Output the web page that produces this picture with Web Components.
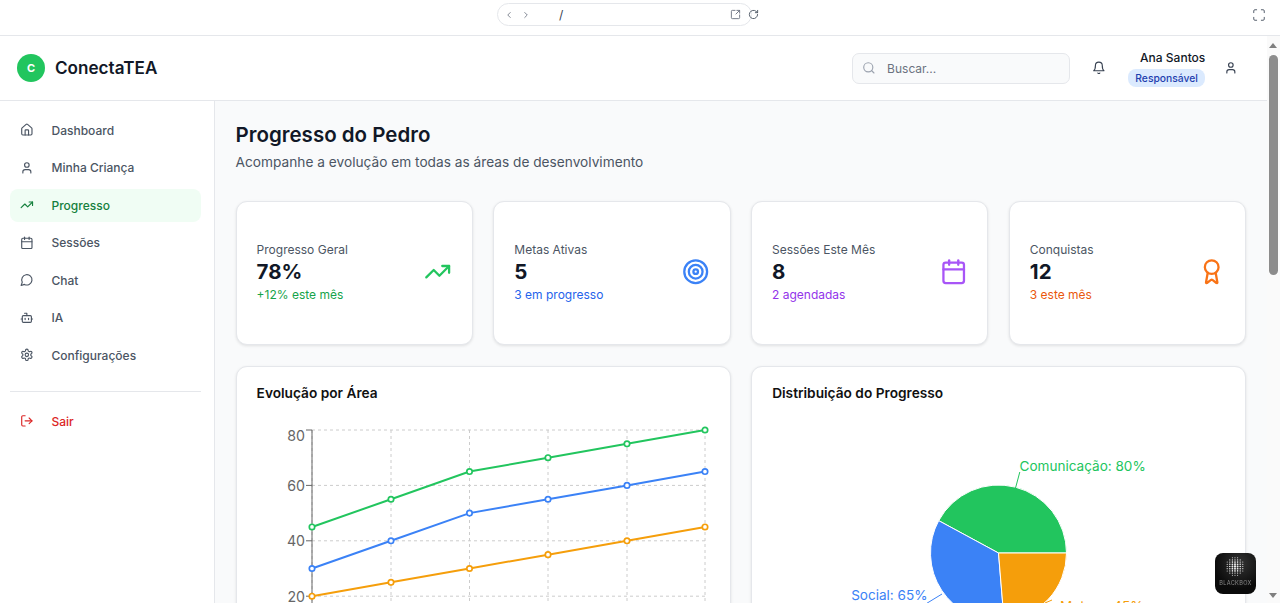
<!DOCTYPE html>
<html lang="pt-BR">
<head>
<meta charset="utf-8">
<title>ConectaTEA</title>
<style>
	html, body { margin: 0; height: 603px; overflow: hidden; background: #fff; font-family: Inter, "Liberation Sans", sans-serif; }
</style>
</head>
<body>

<app-shell>
	<browser-bar slot="top"></browser-bar>
	<app-header slot="header" user="Ana Santos" role="Responsável"></app-header>
	<side-nav slot="side">
		<nav-item icon="home">Dashboard</nav-item>
		<nav-item icon="user">Minha Criança</nav-item>
		<nav-item icon="trending" active>Progresso</nav-item>
		<nav-item icon="calendar">Sessões</nav-item>
		<nav-item icon="chat">Chat</nav-item>
		<nav-item icon="bot">IA</nav-item>
		<nav-item icon="settings">Configurações</nav-item>
		<nav-item icon="logout" slot="footer" danger>Sair</nav-item>
	</side-nav>
	<progress-page>
		<stat-card label="Progresso Geral" value="78%" note="+12% este mês" icon="trending" tone="#16a34a" stroke="#22c55e"></stat-card>
		<stat-card label="Metas Ativas" value="5" note="3 em progresso" icon="target" tone="#2563eb" stroke="#3b82f6"></stat-card>
		<stat-card label="Sessões Este Mês" value="8" note="2 agendadas" icon="calendar" tone="#9333ea" stroke="#a855f7"></stat-card>
		<stat-card label="Conquistas" value="12" note="3 este mês" icon="award" tone="#ea580c" stroke="#f97316"></stat-card>
		<chart-card slot="charts" heading="Evolução por Área"><line-chart></line-chart></chart-card>
		<chart-card slot="charts" heading="Distribuição do Progresso"><pie-chart></pie-chart></chart-card>
	</progress-page>
	<page-scrollbar slot="scroll"></page-scrollbar>
</app-shell>
<blackbox-badge></blackbox-badge>

<script>
const ICONS = {
	home: '<path d="M15 21v-8a1 1 0 0 0-1-1h-4a1 1 0 0 0-1 1v8"/><path d="M3 10a2 2 0 0 1 .709-1.528l7-5.999a2 2 0 0 1 2.582 0l7 5.999A2 2 0 0 1 21 10v9a2 2 0 0 1-2 2H5a2 2 0 0 1-2-2z"/>',
	user: '<path d="M19 21v-2a4 4 0 0 0-4-4H9a4 4 0 0 0-4 4v2"/><circle cx="12" cy="7" r="4"/>',
	trending: '<polyline points="22 7 13.5 15.5 8.5 10.5 2 17"/><polyline points="16 7 22 7 22 13"/>',
	calendar: '<path d="M8 2v4"/><path d="M16 2v4"/><rect width="18" height="18" x="3" y="4" rx="2"/><path d="M3 10h18"/>',
	chat: '<path d="M7.9 20A9 9 0 1 0 4 16.1L2 22Z"/>',
	bot: '<path d="M12 8V4H8"/><rect width="16" height="12" x="4" y="8" rx="2"/><path d="M2 14h2"/><path d="M20 14h2"/><path d="M15 13v2"/><path d="M9 13v2"/>',
	settings: '<path d="M12.22 2h-.44a2 2 0 0 0-2 2v.18a2 2 0 0 1-1 1.73l-.43.25a2 2 0 0 1-2 0l-.15-.08a2 2 0 0 0-2.73.73l-.22.38a2 2 0 0 0 .73 2.73l.15.1a2 2 0 0 1 1 1.72v.51a2 2 0 0 1-1 1.74l-.15.09a2 2 0 0 0-.73 2.73l.22.38a2 2 0 0 0 2.73.73l.15-.08a2 2 0 0 1 2 0l.43.25a2 2 0 0 1 1 1.73V20a2 2 0 0 0 2 2h.44a2 2 0 0 0 2-2v-.18a2 2 0 0 1 1-1.73l.43-.25a2 2 0 0 1 2 0l.15.08a2 2 0 0 0 2.73-.73l.22-.39a2 2 0 0 0-.73-2.73l-.15-.08a2 2 0 0 1-1-1.74v-.5a2 2 0 0 1 1-1.74l.15-.09a2 2 0 0 0 .73-2.73l-.22-.38a2 2 0 0 0-2.73-.73l-.15.08a2 2 0 0 1-2 0l-.43-.25a2 2 0 0 1-1-1.73V4a2 2 0 0 0-2-2z"/><circle cx="12" cy="12" r="3"/>',
	logout: '<path d="M9 21H5a2 2 0 0 1-2-2V5a2 2 0 0 1 2-2h4"/><polyline points="16 17 21 12 16 7"/><line x1="21" y1="12" x2="9" y2="12"/>',
	search: '<circle cx="11" cy="11" r="8"/><path d="m21 21-4.3-4.3"/>',
	bell: '<path d="M6 8a6 6 0 0 1 12 0c0 7 3 9 3 9H3s3-2 3-9"/><path d="M10.3 21a1.94 1.94 0 0 0 3.4 0"/>',
	target: '<circle cx="12" cy="12" r="10"/><circle cx="12" cy="12" r="6"/><circle cx="12" cy="12" r="2"/>',
	award: '<path d="m15.477 12.89 1.515 8.526a.5.5 0 0 1-.81.47l-3.58-2.687a1 1 0 0 0-1.197 0l-3.586 2.686a.5.5 0 0 1-.81-.469l1.514-8.526"/><circle cx="12" cy="8" r="6"/>',
	left: '<path d="m15 18-6-6 6-6"/>',
	right: '<path d="m9 18 6-6-6-6"/>',
	open: '<path d="M21 13v6a2 2 0 0 1-2 2H5a2 2 0 0 1-2-2V5a2 2 0 0 1 2-2h6"/><path d="M13 11 21 3"/><path d="M15 3h6v6"/>',
	reload: '<path d="M21 12a9 9 0 1 1-3-6.7L21 8"/><path d="M21 3v5h-5"/>',
	full: '<path d="M8 3H5a2 2 0 0 0-2 2v3"/><path d="M21 8V5a2 2 0 0 0-2-2h-3"/><path d="M3 16v3a2 2 0 0 0 2 2h3"/><path d="M16 21h3a2 2 0 0 0 2-2v-3"/>'
}

const FONT = 'Inter, "Liberation Sans", sans-serif'

class UiIcon extends HTMLElement {

	connectedCallback() {

		const size = this.getAttribute('size') || 13.7
		const weight = this.getAttribute('weight') || 2

		this.attachShadow({mode: 'open'}).innerHTML = `
			<style>
				:host{ display: inline-flex; flex: none; width: ${size}px; height: ${size}px; }
				svg{ display: block; width: 100%; height: 100%; }
			</style>
			<svg viewBox="0 0 24 24" fill="none" stroke="currentColor" stroke-width="${weight}" stroke-linecap="round" stroke-linejoin="round">${ICONS[this.getAttribute('name')]}</svg>
		`

	}

}

class AppShell extends HTMLElement {

	constructor(){

		super()

		this.attachShadow({mode: 'open'}).innerHTML = `
			<style>
				:host{ display: flex; flex-direction: column; width: 1280px; height: 603px; overflow: hidden; }
				#frame{ flex: 1; min-height: 0; display: flex; }
				#app{ flex: 1; min-width: 0; display: flex; flex-direction: column; }
				#body{ flex: 1; min-height: 0; display: flex; }
			</style>
			<slot name="top"></slot>
			<div id="frame">
				<div id="app">
					<slot name="header"></slot>
					<div id="body">
						<slot name="side"></slot>
						<slot></slot>
					</div>
				</div>
				<slot name="scroll"></slot>
			</div>
		`

	}

}

class BrowserBar extends HTMLElement {

	constructor(){

		super()

		this.attachShadow({mode: 'open'}).innerHTML = `
			<style>
				:host{ display: flex; align-items: flex-start; height: 35px; border-bottom: 1px solid #e5e7eb; background: #fff; color: #6b7280; box-sizing: content-box; }
				#pill{ margin: 3px 0 0 497px; width: 255px; height: 23px; box-sizing: border-box; border: 1px solid #e5e7eb; border-radius: 12px; display: flex; align-items: center; padding-left: 6px; }
				#path{ margin-left: 28px; font: 12px ${FONT}; color: #374151; }
				#open{ margin-left: auto; margin-right: 10px; display: flex; }
				#reload{ margin: 9px 0 0 -4px; color: #4b5563; }
				#full{ margin: 8px 0 0 auto; margin-right: 14px; color: #4b5563; }
				.arrow{ color: #6b7280; }
				.arrow + .arrow{ margin-left: 7px; }
			</style>
			<div id="pill">
				<ui-icon class="arrow" name="left" size="10"></ui-icon>
				<ui-icon class="arrow" name="right" size="10"></ui-icon>
				<span id="path">/</span>
				<ui-icon id="open" name="open" size="11"></ui-icon>
			</div>
			<ui-icon id="reload" name="reload" size="11"></ui-icon>
			<ui-icon id="full" name="full" size="14" weight="1.6"></ui-icon>
		`

	}

}

class AppHeader extends HTMLElement {

	connectedCallback() {

		this.attachShadow({mode: 'open'}).innerHTML = `
			<style>
				:host{ display: flex; align-items: center; height: 64px; border-bottom: 1px solid #e5e7eb; background: #fff; padding: 0 29px 0 17px; box-sizing: content-box; font-family: ${FONT}; }
				#logo{ width: 28px; height: 28px; border-radius: 50%; background: #22c55e; color: #fff; font-size: 11px; font-weight: 700; display: flex; align-items: center; justify-content: center; }
				#brand{ margin: 0 0 1px 10px; font-size: 17.1px; font-weight: 600; color: #111827; }
				#search{ margin-left: auto; width: 218px; height: 31px; box-sizing: border-box; background: #f9fafb; border: 1px solid #e5e7eb; border-radius: 7px; display: flex; align-items: center; gap: 11.3px; padding-left: 9px; color: #6b7280; font-size: 12px; }
				#search ui-icon{ color: #9ca3af; }
				#bell{ margin-left: 22px; color: #374151; }
				#who{ margin-left: 22px; display: flex; flex-direction: column; align-items: flex-end; gap: 3px; }
				#name{ font-size: 12px; font-weight: 500; color: #111827; line-height: 16px; }
				#role{ font-size: 10.3px; font-weight: 500; color: #1e40af; background: #dbeafe; border-radius: 8px; padding: 0 7.5px; line-height: 18px; }
				#me{ margin-left: 19px; color: #374151; }
			</style>
			<div id="logo">C</div>
			<div id="brand">ConectaTEA</div>
			<div id="search"><ui-icon name="search"></ui-icon><span>Buscar...</span></div>
			<ui-icon id="bell" name="bell"></ui-icon>
			<div id="who">
				<div id="name">${this.getAttribute('user')}</div>
				<div id="role">${this.getAttribute('role')}</div>
			</div>
			<ui-icon id="me" name="user"></ui-icon>
		`

	}

}

class SideNav extends HTMLElement {

	constructor(){

		super()

		this.attachShadow({mode: 'open'}).innerHTML = `
			<style>
				:host{ display: flex; flex-direction: column; width: 214px; flex: none; box-sizing: content-box; border-right: 1px solid #e5e7eb; background: #fff; padding-top: 12.5px; }
				#list{ display: flex; flex-direction: column; gap: 4.5px; padding: 0 13px 0 10px; }
				#rule{ margin: 19.5px 13px 12.5px 10px; border-top: 1px solid #e5e7eb; }
				#foot{ padding: 0 13px 0 10px; }
			</style>
			<div id="list"><slot></slot></div>
			<div id="rule"></div>
			<div id="foot"><slot name="footer"></slot></div>
		`

	}

}

class NavItem extends HTMLElement {

	connectedCallback() {

		const color = this.hasAttribute('active') ? '#15803d' : this.hasAttribute('danger') ? '#dc2626' : '#4b5563'

		this.attachShadow({mode: 'open'}).innerHTML = `
			<style>
				:host{ display: flex; align-items: center; gap: 17.5px; height: 33px; box-sizing: border-box; padding-left: 10.3px; border-radius: 8px; font: 500 12px ${FONT}; color: ${color}; background: ${this.hasAttribute('active') ? '#f0fdf4' : 'transparent'}; }
				ui-icon{ color: ${this.hasAttribute('active') || this.hasAttribute('danger') ? color : '#4b5563'}; }
			</style>
			<ui-icon name="${this.getAttribute('icon')}"></ui-icon>
			<slot></slot>
		`

	}

}

class ProgressPage extends HTMLElement {

	constructor(){

		super()

		this.attachShadow({mode: 'open'}).innerHTML = `
			<style>
				:host{ display: block; flex: 1; min-width: 0; overflow: hidden; background: #f9fafb; padding: 20px 21px 0 20.6px; box-sizing: border-box; font-family: ${FONT}; }
				h1{ margin: 0; font-size: 20.5px; font-weight: 600; line-height: 28px; color: #111827; }
				p{ margin: 3px 0 0; font-size: 13.7px; line-height: 20px; color: #4b5563; }
				#stats{ margin-top: 28.6px; display: grid; grid-template-columns: repeat(4, 1fr); gap: 20.55px; }
				#charts{ margin-top: 21.4px; display: grid; grid-template-columns: repeat(2, 1fr); gap: 20.55px; }
			</style>
			<h1>Progresso do Pedro</h1>
			<p>Acompanhe a evolução em todas as áreas de desenvolvimento</p>
			<div id="stats"><slot></slot></div>
			<div id="charts"><slot name="charts"></slot></div>
		`

	}

}

class StatCard extends HTMLElement {

	connectedCallback() {

		const get = n => this.getAttribute(n)

		this.attachShadow({mode: 'open'}).innerHTML = `
			<style>
				:host{ display: flex; align-items: center; justify-content: space-between; height: 144px; box-sizing: border-box; padding: 0 20px 1px; background: #fff; border: 1px solid #e5e7eb; border-radius: 11px; box-shadow: 0 1px 3px rgba(0,0,0,.1); }
				#label{ font-size: 12px; font-weight: 400; line-height: 18px; color: #4b5563; }
				#value{ font-size: 20.5px; font-weight: 700; line-height: 26px; color: #111827; }
				#note{ font-size: 12px; line-height: 18px; margin-top: 1px; color: ${get('tone')}; }
				ui-icon{ color: ${get('stroke')}; }
			</style>
			<div>
				<div id="label">${get('label')}</div>
				<div id="value">${get('value')}</div>
				<div id="note">${get('note')}</div>
			</div>
			<ui-icon name="${get('icon')}" size="27.4"></ui-icon>
		`

	}

}

class ChartCard extends HTMLElement {

	connectedCallback() {

		this.attachShadow({mode: 'open'}).innerHTML = `
			<style>
				:host{ display: block; height: 320px; box-sizing: border-box; padding: 16px 20px 0; background: #fff; border: 1px solid #e5e7eb; border-radius: 11px; box-shadow: 0 1px 3px rgba(0,0,0,.1); }
				h3{ margin: 0; font-size: 13.7px; font-weight: 600; line-height: 20px; color: #111; }
				#plot{ margin-top: 18px; }
			</style>
			<h3>${this.getAttribute('heading')}</h3>
			<div id="plot"><slot></slot></div>
		`

	}

}

class LineChart extends HTMLElement {

	connectedCallback() {

		// plot origin is 257,421 on the page
		const xs = [55, 134, 212.5, 291, 370, 448]
		const y = v => 9 + (80 - v) * 2.77
		const series = [
			['#22c55e', [45, 55, 65, 70, 75, 80]],
			['#3b82f6', [30, 40, 50, 55, 60, 65]],
			['#f59e0b', [20, 25, 30, 35, 40, 45]]
		]

		let grid = ''

		xs.forEach(x => grid += `<line x1="${x}" y1="9" x2="${x}" y2="260"/>`)
		;[80, 60, 40, 20, 0].forEach(v => grid += `<line x1="55" y1="${y(v)}" x2="448" y2="${y(v)}"/>`)

		let ticks = ''

		// the top label sits under its tick, the chart keeps it inside the plot
		;[80, 60, 40, 20].forEach(v => ticks += `
			<line x1="49" y1="${y(v)}" x2="55" y2="${y(v)}" stroke="#666"/>
			<text x="48" y="${y(v) + (v === 80 ? 11 : 5.5)}" text-anchor="end">${v}</text>`)

		let lines = ''

		series.forEach(([color, values]) => {

			lines += `<polyline fill="none" stroke="${color}" stroke-width="2" points="${values.map((v, i) => xs[i] + ',' + y(v)).join(' ')}"/>`

			values.forEach((v, i) => lines += `<circle cx="${xs[i]}" cy="${y(v)}" r="2.7" fill="#fff" stroke="${color}" stroke-width="1.7"/>`)

		})

		this.attachShadow({mode: 'open'}).innerHTML = `
			<style>
				:host{ display: block; }
				svg{ display: block; overflow: visible; }
				text{ font: 14.2px ${FONT}; fill: #666; }
			</style>
			<svg width="453" height="270" viewBox="0 0 453 270">
				<g stroke="#ccc" stroke-dasharray="3 3">${grid}</g>
				<line x1="55" y1="9" x2="55" y2="260" stroke="#666"/>
				${ticks}
				${lines}
			</svg>
		`

	}

}

class PieChart extends HTMLElement {

	connectedCallback() {

		// plot origin is 772,421 on the page
		const cx = 226.5, cy = 132, r = 68
		const data = [
			['#22c55e', 80],
			['#3b82f6', 65],
			['#f59e0b', 45]
		]
		const total = data.reduce((sum, d) => sum + d[1], 0)
		const at = a => (cx + r * Math.cos(a * Math.PI / 180)).toFixed(2) + ' ' + (cy - r * Math.sin(a * Math.PI / 180)).toFixed(2)

		let start = 0, slices = ''

		data.forEach(([color, value]) => {

			const end = start + value / total * 360

			slices += `<path d="M${cx} ${cy}L${at(start)}A${r} ${r} 0 ${end - start > 180 ? 1 : 0} 0 ${at(end)}Z" fill="${color}" stroke="#fff"/>`

			start = end

		})

		this.attachShadow({mode: 'open'}).innerHTML = `
			<style>
				:host{ display: block; }
				svg{ display: block; overflow: visible; }
				text{ font: 13.55px ${FONT}; }
			</style>
			<svg width="453" height="270" viewBox="0 0 453 270">
				${slices}
				<path d="M243.4 67.5L247.8 51" fill="none" stroke="#22c55e"/>
				<path d="M170 173L154.8 182.3" fill="none" stroke="#3b82f6"/>
				<path d="M273 182L280 179" fill="none" stroke="#f59e0b"/>
				<text x="247.5" y="50" fill="#22c55e">Comunicação: 80%</text>
				<text x="155.5" y="179" text-anchor="end" fill="#3b82f6">Social: 65%</text>
				<text x="288" y="189.5" fill="#f59e0b">Motora: 45%</text>
			</svg>
		`

	}

}

class PageScrollbar extends HTMLElement {

	constructor(){

		super()

		this.attachShadow({mode: 'open'}).innerHTML = `
			<style>
				:host{ display: flex; flex-direction: column; align-items: center; width: 13px; flex: none; background: #fafafa; padding: 7px 1px 0 0; box-sizing: border-box; }
				.up{ width: 0; height: 0; border: 4px solid transparent; border-top: 0; border-bottom: 5px solid #7f7f7f; }
				.down{ width: 0; height: 0; border: 4px solid transparent; border-bottom: 0; border-top: 5px solid #7f7f7f; margin-top: auto; margin-bottom: 5px; }
				#thumb{ margin-top: 7px; width: 9px; height: 220px; border-radius: 5px; background: #8c8c8c; }
			</style>
			<div class="up"></div>
			<div id="thumb"></div>
			<div class="down"></div>
		`

	}

}

class BlackboxBadge extends HTMLElement {

	constructor(){

		super()

		let dots = ''

		for( let row = -4; row <= 4; row++ )

			for( let col = -3; col <= 3; col++ ){

				const dx = col * 2.6, dy = row * 2.2
				const far = Math.hypot(dx, dy)

				if( far < 9.6 ) dots += `<circle cx="${20 + dx}" cy="${13.5 + dy}" r="${1.15 - far * .07}" fill="#ececec"/>`

			}

		this.attachShadow({mode: 'open'}).innerHTML = `
			<style>
				:host{ position: fixed; left: 1215px; top: 553px; width: 41px; height: 41px; border-radius: 8px; background: radial-gradient(circle at 60% 25%, #333, #0a0a0a 65%); display: block; overflow: hidden; }
				svg{ display: block; }
				span{ position: absolute; left: 0; right: 0; top: 27px; text-align: center; font: 5.6px ${FONT}; letter-spacing: .3px; color: #8a8a8a; }
			</style>
			<svg width="41" height="41">${dots}</svg>
			<span>BLACKBOX</span>
		`

	}

}

customElements.define('ui-icon', UiIcon)
customElements.define('app-shell', AppShell)
customElements.define('browser-bar', BrowserBar)
customElements.define('app-header', AppHeader)
customElements.define('side-nav', SideNav)
customElements.define('nav-item', NavItem)
customElements.define('progress-page', ProgressPage)
customElements.define('stat-card', StatCard)
customElements.define('chart-card', ChartCard)
customElements.define('line-chart', LineChart)
customElements.define('pie-chart', PieChart)
customElements.define('page-scrollbar', PageScrollbar)
customElements.define('blackbox-badge', BlackboxBadge)
</script>
</body>
</html>
